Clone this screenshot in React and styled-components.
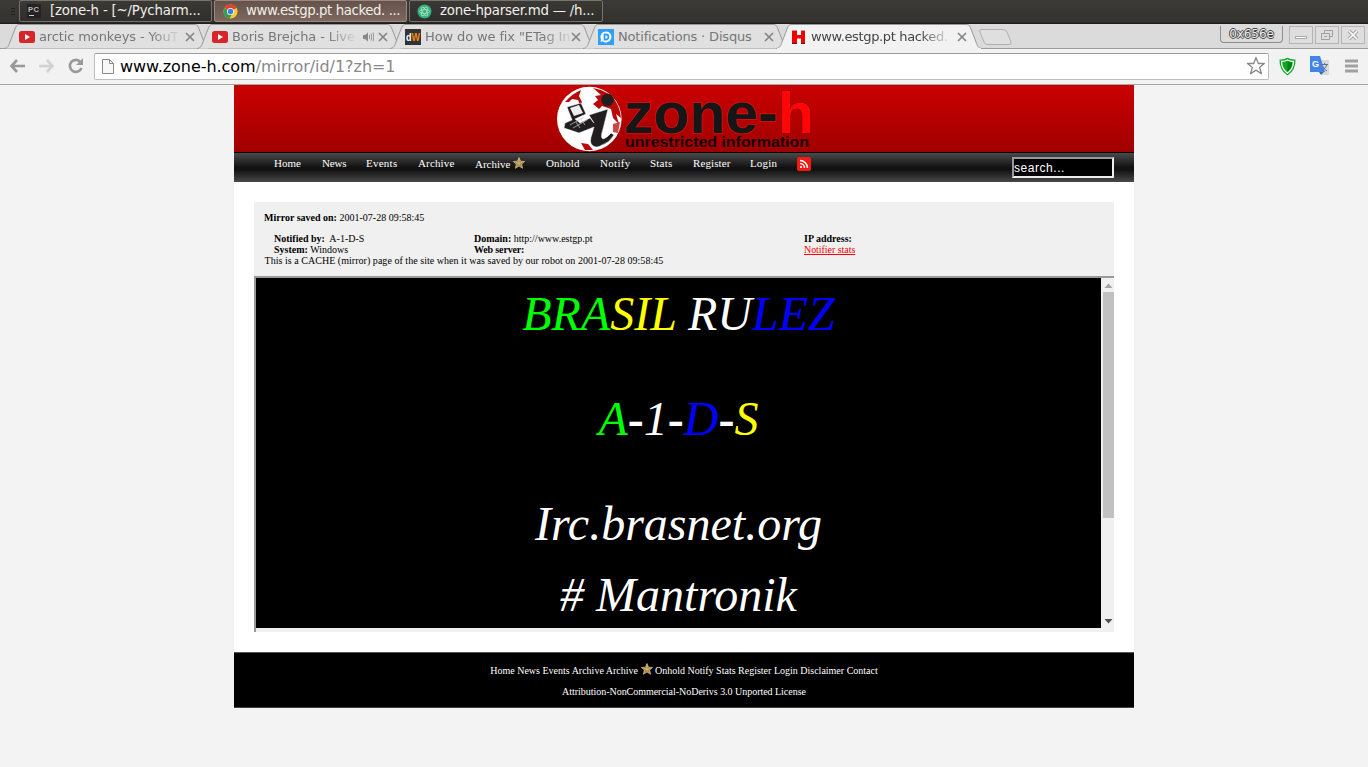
import React from "react";
import styled, { createGlobalStyle } from "styled-components";

const Global = createGlobalStyle`
  * { box-sizing: border-box; }
  html, body { margin: 0; padding: 0; background: #f3f3f3; }
  body { width: 1368px; height: 767px; overflow: hidden; font-family: "Liberation Serif", serif; }
`;
const ui = `"DejaVu Sans", sans-serif`;
const serif = `"Liberation Serif", serif`;

const Screen = styled.div`width: 1368px; height: 767px; overflow: hidden; display: flex; flex-direction: column;`;

/* desktop panel */
const Panel = styled.div`
  height: 24px; flex: none; display: flex; align-items: flex-start; gap: 2px; padding-left: 9px;
  background: linear-gradient(#3b3a36, #33322e 22px, #1f1e1b 23px);
`;
const Grip = styled.svg`width: 8px; height: 22px; flex: none;`;
const Task = styled.div`
  width: ${p => p.$w || 193}px; height: 22px; flex: none; display: flex; align-items: center; gap: ${p => p.$gap || 8}px;
  padding-left: ${p => p.$pad || 8}px; border: 1px solid ${p => (p.$active ? "#9c8880" : "#76736a")}; border-radius: 2px;
  background: ${p => (p.$active ? "linear-gradient(#65524a, #7e685f)" : "linear-gradient(#3a3935, #2f2e2b)")};
  color: #f1efe9; font: 13.33px/20px ${ui}; white-space: nowrap;
  svg { flex: none; }
`;
const TaskText = styled.span`letter-spacing: ${p => p.$ls || 0}px;`;

/* tabs */
const Strip = styled.div`height: 25px; flex: none; display: flex; background: #dbdbdb; border-bottom: 1px solid #9d9d9b; padding-left: 4px;`;
const Tab = styled.div`
  position: relative; width: 206px; height: 25px; flex: none; margin-right: -13px; padding: 0 12px 0 15px;
  display: flex; align-items: center; z-index: ${p => (p.$active ? 2 : 1)};
  color: ${p => (p.$active ? "#444" : "#777")}; font: 13px/24px ${ui};
`;
const TabShape = styled.svg`position: absolute; left: 0; top: 0; z-index: -1;`;
const Favicon = styled.svg`width: 16px; height: 16px; flex: none; margin-right: 4px;`;
const TabText = styled.span`
  flex: none; white-space: nowrap; letter-spacing: ${p => p.$ls || 0}px;
  ${p => p.$fade && "mask-image: linear-gradient(90deg, #000 calc(100% - 28px), rgba(0,0,0,.12));"}
`;
const Speaker = styled.svg`width: 12px; height: 12px; flex: none; margin-left: auto;`;
const Close = styled.svg`width: 10px; height: 10px; flex: none; margin-left: ${p => (p.$near ? "4px" : "auto")}; margin-right: 3px;`;
const NewTab = styled.svg`width: 36px; height: 22px; margin-left: 9px; margin-top: 2px;`;
const WindowButtons = styled.div`margin-left: auto; display: flex; align-items: flex-start; padding-top: 2px; padding-right: 1px;`;
const WinName = styled.div`
  width: 63px; height: 17px; margin-right: 6px; border: 1px solid #8e8e8e; border-top: 0; border-radius: 0 0 4px 4px;
  font: 12px/17px ${ui}; letter-spacing: -0.1px; text-align: center; color: #eee;
  text-shadow: 1px 0 #444, -1px 0 #444, 0 1px #444, 0 -1px #444;
`;
const WinBtn = styled.svg`width: 24px; height: 18px; margin-right: 2px;`;

/* toolbar */
const Toolbar = styled.div`
  height: 36px; flex: none; display: flex; align-items: center; padding: 0 9px 1px; background: #f2f2f2; border-bottom: 1px solid #a7a7a5;
`;
const NavIcon = styled.svg`width: 18px; height: 18px; flex: none; margin-right: ${p => p.$mr}px;`;
const Omnibox = styled.div`
  width: 1175px; height: 27px; flex: none; display: flex; align-items: center; padding: 0 3px 0 7px; background: #fff;
  border: 1px solid #bdbdbd; border-top-color: #9b9b9b; border-radius: 2px; font: 16px/24px ${ui};
`;
const Url = styled.span`margin-left: 6px; padding-top: 2px; color: #888; letter-spacing: -0.04px; white-space: nowrap; b { font-weight: 400; color: #000; }`;
const Star = styled.svg`margin-left: auto;`;
const Ext = styled.svg`flex: none; margin-left: ${p => p.$ml}px;`;

/* site */
const Site = styled.div`width: 900px; margin: 0 auto; background: #fff;`;
const Header = styled.div`height: 67px; background: linear-gradient(#cb0000, #a00000); display: flex;`;
const Logo = styled.svg`margin-left: 316px;`;
const Menu = styled.div`
  height: 30px; border-top: 1px solid #000; display: flex; padding-left: 40px; gap: 20px;
  background: linear-gradient(#4a4a4a, #111 50%, #111 58%, #484848);
  color: #fff; font: 11px/21px ${serif};
`;
const MenuItem = styled.span`white-space: nowrap; letter-spacing: ${p => p.$ls || 0}px; padding-top: ${p => p.$pt || 0}px; width: ${p => p.$w}px; svg { vertical-align: ${p => p.$va || 0}px; }`;
const Search = styled.div`
  width: 102px; height: 21px; margin: 4px 20px 0 auto; background: #000; border: 2px solid; border-color: #999 #eee #eee #999;
  font: 12px/18px "Liberation Sans", sans-serif; letter-spacing: 0.55px;
`;
const Content = styled.div`padding: 20px;`;
const Info = styled.div`height: 74px; background: #f0f0f0; padding: 10px 10px 0; font: 10px/11px ${serif}; color: #000;`;
const Saved = styled.div`margin-bottom: 10px;`;
const InfoRow = styled.div`display: grid; grid-template-columns: 200px 330px auto; padding-left: 10px;`;
const Txt = styled.span`letter-spacing: ${p => p.$ls || 0}px; margin-left: ${p => p.$ml || 0}px;`;
const StatsLink = styled.span`color: #f00; text-decoration: underline; letter-spacing: -0.05px;`;
const Frame = styled.div`height: 356px; background: #f0f0f0; border: solid #999; border-width: 2px 0 0 2px; display: flex; padding-bottom: 4px;`;
const Deface = styled.div`width: 845px; background: #000; color: #fff; padding-top: 8px;`;
const Line = styled.div`
  height: ${p => p.$h}px; text-align: center; font: italic 48px/56px ${serif}; white-space: pre;
  b { font-style: normal; }
`;
const Ink = styled.span`color: ${p => p.$c};`;
const Scroll = styled.div`width: 13px; display: flex; flex-direction: column; padding-left: 2px; svg { flex: none; }`;
const Thumb = styled.div`height: 226px; background: #c1c1c1; margin-bottom: auto;`;
const Footer = styled.div`
  height: 56px; background: #000; border-top: 1px solid #555; border-bottom: 1px solid #444; color: #fff;
  font: 10px/21px ${serif}; text-align: center; padding-top: 7px;
`;
const FootLine = styled.div`height: 21px; white-space: nowrap; letter-spacing: ${p => p.$ls || 0}px; svg { vertical-align: -1px; }`;

const Shape = ({ active }) => (
  <TabShape width="206" height="25" viewBox="0 0 206 25">
    <path d="M0 24.5C4 24 4.500 22 6 18L11 5C12.500 1.500 13 .5 16 .5H190C193 .5 193.500 1.500 195 5L200 18C201.500 22 202 24 206 24.500" fill={active ? "#f2f2f2" : "#e0e0e0"} stroke="#999" />
    {active && <path d="M1 24.500H205" stroke="#f2f2f2" />}
  </TabShape>
);
const X = ({ near }) => <Close $near={near} viewBox="0 0 10 10"><path d="M1 1L9 9M9 1L1 9" stroke="#858585" strokeWidth="1.700" /></Close>;
const YouTube = () => (
  <Favicon viewBox="0 0 16 16"><rect y="2" width="16" height="12" rx="2.500" fill="#d9252a" /><path d="M6 5L11 8L6 11Z" fill="#fff" /></Favicon>
);
const GoldStar = () => (
  <svg width="12" height="12" viewBox="0 0 12 12"><path d="M6 .5L7.500 4.200L11.600 4.500L8.600 7L9.600 11.300L6 9L2.400 11.300L3.300 7L.4 4.500L4.500 4.200Z" fill="#a98a4a" stroke="#dcc890" strokeWidth=".7" /><path d="M6 2V8M3 5.500L6 6.500L9 5.500" stroke="#e4cf96" strokeWidth=".6" fill="none" /></svg>
);

export default function App() {
  return (
    <Screen>
      <Global />
      <Panel>
        <Grip><path d="M2 8.500H6M2 11.500H6M2 14.500H6" stroke="#22211f" /></Grip>
        <Task $pad={7} $gap={9}>
          <svg width="14" height="14"><rect width="14" height="14" fill="#232323" /><text x="1" y="7.500" fontSize="7.500" fontWeight="700" fontFamily="Liberation Sans" fill="#bbb" textLength="11">PC</text><path d="M2 11.500H7" stroke="#ccc" /></svg>
          <TaskText $ls={-0.2}>[zone-h - [~/Pycharm...</TaskText>
        </Task>
        <Task $active $pad={8} $gap={8}>
          <svg width="15" height="15" viewBox="0 0 16 16"><circle cx="8" cy="8" r="7.500" fill="#f8cf2b" /><path d="M8 8L1.500 4.250A7.500 7.500 0 0 1 14.500 4.250Z" fill="#df3e31" /><path d="M8 8L1.500 4.250A7.500 7.500 0 0 0 7 15.400L10.500 9.500Z" fill="#2fa14f" /><circle cx="8" cy="8" r="3.800" fill="#f4f4f4" /><circle cx="8" cy="8" r="2.900" fill="#3f7de0" /></svg>
          <TaskText $ls={-0.42}>www.estgp.pt hacked. ...</TaskText>
        </Task>
        <Task $w={194} $pad={7} $gap={8}>
          <svg width="15" height="15"><circle cx="7.500" cy="7.500" r="7" fill="#35b07c" /><g fill="none" stroke="#a8e2c6" strokeWidth=".8"><ellipse cx="7.500" cy="7.500" rx="5" ry="2" /><ellipse cx="7.500" cy="7.500" rx="5" ry="2" transform="rotate(60 7.500 7.500)" /><ellipse cx="7.500" cy="7.500" rx="5" ry="2" transform="rotate(120 7.500 7.500)" /></g></svg>
          <TaskText $ls={-0.24}>zone-hparser.md — /h...</TaskText>
        </Task>
      </Panel>

      <Strip>
        <Tab><Shape /><YouTube /><TabText $fade $ls={-0.12}>arctic monkeys - YouT</TabText><X /></Tab>
        <Tab><Shape /><YouTube /><TabText $fade $ls={-0.12}>Boris Brejcha - Live</TabText>
          <Speaker><path d="M1 4H3L6 1.500V10.500L3 8H1Z" fill="#888" /><path d="M7.500 4V8M9 2.500Q10.500 6 9 9.500M11 1.500Q12.500 6 11 10.500" fill="none" stroke="#999" /></Speaker>
          <X near /></Tab>
        <Tab><Shape /><Favicon viewBox="0 0 16 16"><rect width="16" height="16" fill="#333" /><text x="1" y="12" fontSize="10" fontWeight="700" fontFamily="Liberation Sans" fill="#fff" textLength="14" lengthAdjust="spacingAndGlyphs">d<tspan fill="#f08a1c">W</tspan></text></Favicon><TabText $fade $ls={-0.12}>How do we fix "ETag In</TabText><X /></Tab>
        <Tab><Shape /><Favicon viewBox="0 0 16 16"><rect width="16" height="16" fill="#2e9fff" /><path d="M8 2.500A5.500 5.500 0 1 1 4.500 12.300L2.300 12.700L3.100 10.600A5.500 5.500 0 0 1 8 2.500Z" fill="#fff" /><path d="M6.500 5.500H8A2.500 2.500 0 0 1 8 10.500H6.500Z" fill="none" stroke="#2e9fff" strokeWidth="1.800" /></Favicon><TabText $ls={-0.17}>Notifications · Disqus</TabText><X /></Tab>
        <Tab $active><Shape active /><Favicon viewBox="0 0 16 16"><rect x="1" width="14" height="16" fill="#fff" /><path d="M1 1.500H6V6H10V1.500H14V14.500H10V9.500H6V14.500H1Z" fill="#f00000" /><path d="M1 14.500H6M10 14.500H14" stroke="#800" /></Favicon><TabText $fade $ls={-0.35}>www.estgp.pt hacked.</TabText><X /></Tab>
        <NewTab><path d="M3 3.500H24Q28 3.500 29 6L33 16Q34 18.500 31 18.500H10Q7 18.500 6 16L2 6Q1 3.500 3 3.500Z" fill="#dfdfdf" stroke="#b0b0b0" /></NewTab>
        <WindowButtons>
          <WinName>0x656e</WinName>
          <WinBtn><rect x=".5" y=".5" width="23" height="17" fill="#dedede" stroke="#b5b5b5" /><rect x="6.500" y="10.500" width="11" height="2" fill="#fff" stroke="#aaa" /></WinBtn>
          <WinBtn><rect x=".5" y=".5" width="23" height="17" fill="#dedede" stroke="#b5b5b5" /><path d="M9.500 7.500V4.500H17.500V10.500H14.500M6.500 7.500H14.500V13.500H6.500ZM9 10.500H12" fill="none" stroke="#a0a0a0" /></WinBtn>
          <WinBtn><rect x=".5" y=".5" width="23" height="17" fill="#dedede" stroke="#b5b5b5" /><path d="M8 5L16 13M16 5L8 13" stroke="#a0a0a0" strokeWidth="3.500" /><path d="M8 5L16 13M16 5L8 13" stroke="#fff" strokeWidth="1.600" /></WinBtn>
        </WindowButtons>
      </Strip>

      <Toolbar>
        <NavIcon $mr={11}><path d="M16 9H3M8 3L2.500 9L8 15" fill="none" stroke="#999" strokeWidth="2.600" /></NavIcon>
        <NavIcon $mr={11}><path d="M1 9H14M9 3L14.500 9L9 15" fill="none" stroke="#d2d2d2" strokeWidth="2.600" /></NavIcon>
        <NavIcon $mr={9}><path d="M13.500 5A6 6 0 1 0 14.500 11" fill="none" stroke="#999" strokeWidth="2.600" /><path d="M16 1V8H9Z" fill="#999" /></NavIcon>
        <Omnibox>
          <svg width="12" height="16"><path d="M.5 1.500H7.500L11.500 5.500V15.500H.5Z" fill="#f8f8f8" stroke="#888" /><path d="M7.500 1.500V5.500H11.500" fill="none" stroke="#888" /></svg>
          <Url><b>www.zone-h.com</b>/mirror/id/1?zh=1</Url>
          <Star width="20" height="20" viewBox="0 0 20 20"><path d="M11 1.500L13.300 7.500H19.300L14.600 11.400L16.400 17.800L11 14.100L5.600 17.800L7.400 11.400L2.500 7.500H8.700Z" fill="#fff" stroke="#888" strokeWidth="1.300" strokeLinejoin="round" /></Star>
        </Omnibox>
        <Ext $ml={10} width="18" height="19" viewBox="0.5 0 18 19"><path d="M1 2.500Q5 3 9 .8Q13 3 17 2.500Q17.500 13 9 18.500Q.5 13 1 2.500Z" fill="#0caa22" /><path d="M3 4.300Q6 4.500 9 3Q12 4.500 15 4.300Q15 12 9 16.200Q3 12 3 4.300Z" fill="none" stroke="#fff" strokeWidth="1.300" /><path d="M9 4.500Q11.500 5.800 13.500 5.700Q13.300 11 9 14.500Z" fill="#087d18" /></Ext>
        <Ext $ml={13} width="20" height="20" viewBox="0 0 20 20"><path d="M8 4H19V19H12Z" fill="#d9d9d9" /><path d="M0 0H10L15 16H0Z" fill="#4384e8" /><path d="M9 16H14L11 19Z" fill="#3568c8" /><text x="2" y="11" fontFamily="Liberation Sans" fontWeight="700" fontSize="9" fill="#fff">G</text><path d="M11 8.500H18M14.500 7V8.500M12 15Q16 12 17 8.500M13 10.500Q14 13 17 15" stroke="#5d738e" fill="none" /></Ext>
        <Ext $ml={15} width="14" height="14"><path d="M0 2H13M0 7H13M0 12H13" stroke="#a0a0a0" strokeWidth="3" /></Ext>
      </Toolbar>

      <Site>
        <Header>
          <Logo width="280" height="67" viewBox="0 0 280 67">
            <circle cx="39.300" cy="34" r="32.300" fill="#fff" />
            <g fill="#b80a0a">
              <path d="M15 17Q23 8 31 5L29 11L32 17L30 20L28 15L22 14L19 17Z" />
              <path d="M43 3L51 5L61 10Q70 20 71 33L66 29L69 39L63 33L61 24L52 21L49 24L43 19L48 15L45 11L51 10Z" />
              <path d="M18 23L22 21L29 31L24 33ZM63 39L70 37L68 48L63 47Z" opacity=".75" />
              <path d="M31 58L38 59L43 65L35 65Z" />
            </g>
            <path d="M39 30L58 24L53 44Q50 53 53 54Q57 53 61 48L64 50Q59 58 52 60Q46 64 42 60Q39 57 42 49L44 42L29 48L14 43L15 38L22 35L17 22L31 18L36 29L25 34L30 38L40 33L44 38Z" fill="#221e1f" stroke="#fff" strokeWidth=".5" />
            <path d="M20 23L29 20L33 28L24 31Z" fill="#eee" />
            <path d="M20 40L34 32M23 43L37 35M26 37L30 43M31 34L35 40" stroke="#c9c9c9" strokeWidth=".7" />
            <circle cx="57.500" cy="15" r="6.200" fill="#221e1f" />
            <g fontFamily="Liberation Sans" fontWeight="700">
              <text x="74" y="48" fontSize="58" textLength="190" lengthAdjust="spacingAndGlyphs" fill="#161616" stroke="#e3262a" strokeOpacity=".55" strokeWidth="1.600" paintOrder="stroke">zone-<tspan fill="#ff0707" stroke="#700">h</tspan></text>
              <text x="75" y="62" fontSize="15" textLength="184" lengthAdjust="spacingAndGlyphs" fill="#160000">unrestricted information</text>
            </g>
          </Logo>
        </Header>
        <Menu>
          <MenuItem $w={28}>Home</MenuItem><MenuItem $w={24} $ls={-0.2}>News</MenuItem><MenuItem $w={32} $ls={0.25}>Events</MenuItem><MenuItem $w={37} $ls={0.15}>Archive</MenuItem>
          <MenuItem $w={51} $pt={1} $va={-1}>Archive <GoldStar /></MenuItem>
          <MenuItem $w={34} $ls={0.1}>Onhold</MenuItem><MenuItem $w={30} $ls={0.3}>Notify</MenuItem><MenuItem $w={23} $ls={0.2}>Stats</MenuItem><MenuItem $w={37} $ls={0.1}>Register</MenuItem><MenuItem $w={27} $ls={0.15}>Login</MenuItem>
          <MenuItem $w={14} $pt={4}><svg width="14" height="14" display="block"><rect width="14" height="14" rx="2" fill="#f21a12" /><g fill="none" stroke="#fff" strokeWidth="1.500"><path d="M3 6.500A4.500 4.500 0 0 1 7.500 11M3 3.500A7.500 7.500 0 0 1 10.500 11" /></g><circle cx="4" cy="10" r="1.100" fill="#fff" /></svg></MenuItem>
          <Search>search...</Search>
        </Menu>
        <Content>
          <Info>
            <Saved><b>Mirror saved on:</b> 2001-07-28 09:58:45</Saved>
            <InfoRow><span><b>Notified by:</b> <Txt $ml={2}>A-1-D-S</Txt></span><span><b>Domain:</b> http://www.estgp.pt</span><b>IP address:</b></InfoRow>
            <InfoRow><span><b>System:</b> Windows</span><Txt as="b" $ls={-0.15}>Web server:</Txt><StatsLink>Notifier stats</StatsLink></InfoRow>
            <Txt $ls={0.035} $ml={0.5}>This is a CACHE (mirror) page of the site when it was saved by our robot on 2001-07-28 09:58:45</Txt>
          </Info>
          <Frame>
            <Deface>
              <Line $h={105}><Ink $c="#0f0">BRA</Ink><Ink $c="#ff0">SIL</Ink> RU<Ink $c="#00f">LEZ</Ink></Line>
              <Line $h={105}><Ink $c="#0f0">A</Ink><b>-</b>1<b>-</b><Ink $c="#00f">D</Ink><b>-</b><Ink $c="#ff0">S</Ink></Line>
              <Line $h={71}>Irc.brasnet.org</Line>
              <Line $h={56}># Mantronik</Line>
            </Deface>
            <Scroll>
              <svg width="11" height="14"><path d="M1.500 10H9.500L5.500 5.500Z" fill="#a3a3a3" /></svg>
              <Thumb />
              <svg width="11" height="14"><path d="M1.500 5H9.500L5.500 9.500Z" fill="#505050" /></svg>
            </Scroll>
          </Frame>
        </Content>
        <Footer>
          <FootLine>Home News Events Archive Archive <GoldStar /> Onhold Notify Stats Register Login Disclaimer Contact</FootLine>
          <FootLine $ls={-0.03}>Attribution-NonCommercial-NoDerivs 3.0 Unported License</FootLine>
        </Footer>
      </Site>
    </Screen>
  );
}
